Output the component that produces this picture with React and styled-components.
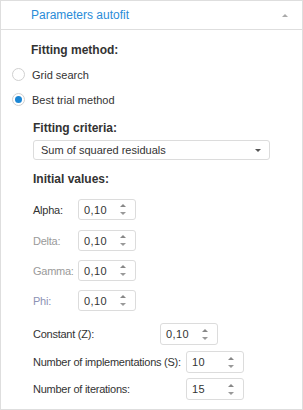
import React from "react";
import styled, { createGlobalStyle } from "styled-components";

const Global = createGlobalStyle`
  html, body { margin: 0; padding: 0; background: #fff; }
  body { font-family: "Liberation Sans", Arial, sans-serif; font-size: 11px; color: #333; }
  * { box-sizing: border-box; }
`;

const Panel = styled.div`
  width: 303px;
  height: 410px;
  border: 1px solid #dedede;
  display: flex;
  flex-direction: column;
  background: #fff;
`;

const Header = styled.div`
  height: 29px;
  flex: none;
  border-bottom: 1px solid #dedede;
  display: flex;
  align-items: center;
  padding: 0 14px 0 30px;
  color: #2a8cd8;
  font-size: 12px;
  justify-content: space-between;
`;

const Caret = styled.span`
  width: 0;
  height: 0;
  border-left: 3px solid transparent;
  border-right: 3px solid transparent;
  ${(p) => (p.$down ? `border-top: 3px solid ${p.$color};` : `border-bottom: 3px solid ${p.$color};`)}
  display: block;
`;

const Body = styled.div`
  padding: 12px 0 0 11px;
  display: flex;
  flex-direction: column;
`;

const Title = styled.div`
  font-weight: bold;
  font-size: 12px;
  line-height: 16px;
  height: 16px;
  padding-left: ${(p) => p.$indent || 0}px;
  margin-top: ${(p) => p.$mt || 0}px;
`;

const RadioRow = styled.label`
  display: flex;
  align-items: center;
  height: 25px;
  gap: 7px;
  margin-top: ${(p) => p.$mt || 0}px;
`;

const RadioCircle = styled.span`
  width: 13px;
  height: 13px;
  border-radius: 50%;
  border: 1px solid #d0d0d0;
  display: flex;
  align-items: center;
  justify-content: center;
  &::after {
    content: "";
    width: 7px;
    height: 7px;
    border-radius: 50%;
    background: ${(p) => (p.$on ? "#1b86d4" : "transparent")};
  }
`;

const Section = styled.div`
  padding-left: 21px;
  display: flex;
  flex-direction: column;
`;

const Select = styled.div`
  margin-top: 4px;
  width: 237px;
  height: 20px;
  border: 1px solid #dcdcdc;
  border-radius: 3px;
  display: flex;
  align-items: center;
  justify-content: space-between;
  padding: 0 8px 0 7px;
`;

const FieldRow = styled.div`
  display: flex;
  align-items: center;
  margin-top: ${(p) => p.$mt || 0}px;
`;

const Label = styled.span`
  width: ${(p) => p.$w}px;
  flex: none;
  white-space: nowrap;
  letter-spacing: -0.25px;
  color: ${(p) => p.$color || "#333"};
`;

const Spin = styled.div`
  width: 58px;
  height: ${(p) => p.$h || 21}px;
  border: 1px solid #dcdcdc;
  border-radius: 3px;
  display: flex;
  align-items: center;
  justify-content: space-between;
  padding: 0 9px 0 5px;
  letter-spacing: 0.4px;
`;

const Arrows = styled.div`
  display: flex;
  flex-direction: column;
  gap: 5px;
`;

const Spinner = ({ value, h }) => (
  <Spin $h={h}>
    <span>{value}</span>
    <Arrows>
      <Caret $color="#888" />
      <Caret $down $color="#999" />
    </Arrows>
  </Spin>
);

export default function App() {
  return (
    <>
      <Global />
      <Panel>
        <Header>
          <span>Parameters autofit</span>
          <Caret $color="#aaa" />
        </Header>
        <Body>
          <Title $indent={19}>Fitting method:</Title>
          <RadioRow $mt={4}>
            <RadioCircle />
            <span>Grid search</span>
          </RadioRow>
          <RadioRow>
            <RadioCircle $on />
            <span>Best trial method</span>
          </RadioRow>
          <Section>
            <Title $mt={8}>Fitting criteria:</Title>
            <Select>
              <span>Sum of squared residuals</span>
              <Caret $down $color="#555" />
            </Select>
            <Title $mt={11}>Initial values:</Title>
            <FieldRow $mt={12}>
              <Label $w={45}>Alpha:</Label>
              <Spinner value="0,10" />
            </FieldRow>
            <FieldRow $mt={10}>
              <Label $w={45} $color="#9a9a9a">Delta:</Label>
              <Spinner value="0,10" />
            </FieldRow>
            <FieldRow $mt={9}>
              <Label $w={45} $color="#9a9a9a">Gamma:</Label>
              <Spinner value="0,10" />
            </FieldRow>
            <FieldRow $mt={9}>
              <Label $w={45} $color="#8c92b4">Phi:</Label>
              <Spinner value="0,10" />
            </FieldRow>
            <FieldRow $mt={12}>
              <Label $w={127}>Constant (Z):</Label>
              <Spinner value="0,10" h={22} />
            </FieldRow>
            <FieldRow $mt={6}>
              <Label $w={153}>Number of implementations (S):</Label>
              <Spinner value="10" h={22} />
            </FieldRow>
            <FieldRow $mt={5}>
              <Label $w={153}>Number of iterations:</Label>
              <Spinner value="15" h={22} />
            </FieldRow>
          </Section>
        </Body>
      </Panel>
    </>
  );
}
